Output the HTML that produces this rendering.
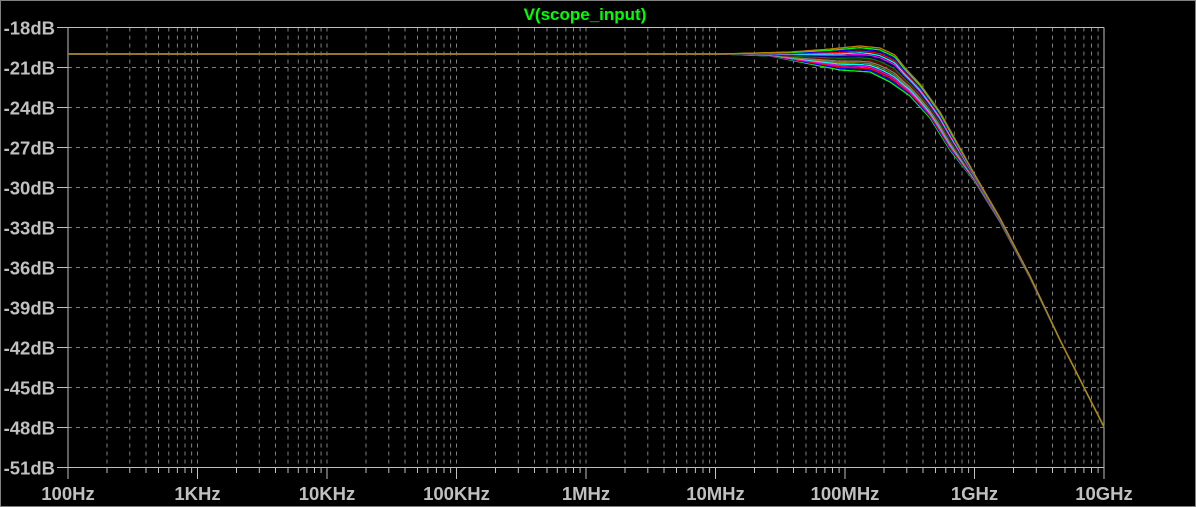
<!DOCTYPE html><html><head><style>body{margin:0;background:#000;overflow:hidden}svg{display:block}</style></head><body>
<svg id="s" width="1196" height="507" xmlns="http://www.w3.org/2000/svg" font-family="Liberation Sans, sans-serif" font-weight="bold">
<rect x="0.5" y="0.5" width="1195" height="506" fill="#000" stroke="#808080"/>
<text x="585" y="20" fill="#00ff00" font-size="17" text-anchor="middle">V(scope_input)</text>
<g id="g"></g>
</svg>
<script>
(function(){
var g=document.getElementById('g'),h='';
var X0=68,X1=1104,Y0=27.5,Y1=467.5,D=(X1-X0)/8;
for(var i=0;i<12;i++){var y=Y0+i*40;
 if(i>0&&i<11)h+='<line x1="'+X0+'" y1="'+y+'" x2="'+X1+'" y2="'+y+'" stroke="#808080" stroke-dasharray="4,4"/>';
 h+='<line x1="57" y1="'+y+'" x2="'+X0+'" y2="'+y+'" stroke="#c0c0c0"/>';
 h+='<text x="55" y="'+(y+7)+'" fill="#c0c0c0" font-size="18.5" text-anchor="end">'+(-18-3*i)+'dB</text>';}
var labs=['100Hz','1KHz','10KHz','100KHz','1MHz','10MHz','100MHz','1GHz','10GHz'];
for(var d=0;d<9;d++){var x=X0+d*D;
 if(d>0&&d<8)h+='<line x1="'+x+'" y1="'+Y0+'" x2="'+x+'" y2="'+Y1+'" stroke="#808080" stroke-dasharray="4,4"/>';
 h+='<line x1="'+x+'" y1="'+Y1+'" x2="'+x+'" y2="479" stroke="#c0c0c0"/>';
 h+='<text x="'+x+'" y="500" fill="#c0c0c0" font-size="18.5" text-anchor="middle">'+labs[d]+'</text>';
 if(d<8)for(var k=2;k<10;k++){var xx=(x+Math.log10(k)*D).toFixed(1);
  h+='<line x1="'+xx+'" y1="'+Y0+'" x2="'+xx+'" y2="'+Y1+'" stroke="#808080" stroke-dasharray="4,4"/>';
  h+='<line x1="'+xx+'" y1="'+Y1+'" x2="'+xx+'" y2="473" stroke="#c0c0c0"/>';}}
h+='<line x1="'+X0+'" y1="'+Y0+'" x2="'+X1+'" y2="'+Y0+'" stroke="#c0c0c0"/>';
h+='<line x1="'+X0+'" y1="'+Y1+'" x2="'+X1+'" y2="'+Y1+'" stroke="#c0c0c0"/>';
h+='<line x1="'+X0+'" y1="'+Y0+'" x2="'+X0+'" y2="'+Y1+'" stroke="#c0c0c0"/>';
h+='<line x1="'+X1+'" y1="'+Y0+'" x2="'+X1+'" y2="'+Y1+'" stroke="#c0c0c0"/>';
var tp=[[68,54],[720,54],[790,52],[830,49],[860,46],[880,48],[895,55],[905,68],[920,84],[940,112],[960,148],[975,175],[1000,218],[1030,276],[1060,340],[1104,427]];
var bt=[[68,54],[720,54],[770,56],[810,64],[840,70],[870,72],[890,82],[910,96],[930,118],[950,150],[975,182],[1000,222],[1030,278],[1060,340],[1104,427]];
function f(p,x){for(var i=1;i<p.length;i++)if(x<=p[i][0]){var a=p[i-1],b=p[i];return a[1]+(b[1]-a[1])*(x-a[0])/(b[0]-a[0]);}return p[p.length-1][1];}
var cols=['#00ff00','#0000ff','#ff0000','#ff00ff','#00ffff','#808000','#808080','#800000','#008000','#000080','#ff00ff','#00ffff','#ff0000','#0000ff','#00ff00','#c08000'];
for(var c=0;c<cols.length;c++){var t=c/(cols.length-1),pts=[];
 for(var x=68;x<=1104;x+=2)pts.push(x+','+(f(bt,x)*(1-t)+f(tp,x)*t).toFixed(1));
 h+='<polyline points="'+pts.join(' ')+'" fill="none" stroke="'+cols[c]+'" stroke-width="1.3"/>';}
g.innerHTML=h;
})();
</script>
</body></html>
